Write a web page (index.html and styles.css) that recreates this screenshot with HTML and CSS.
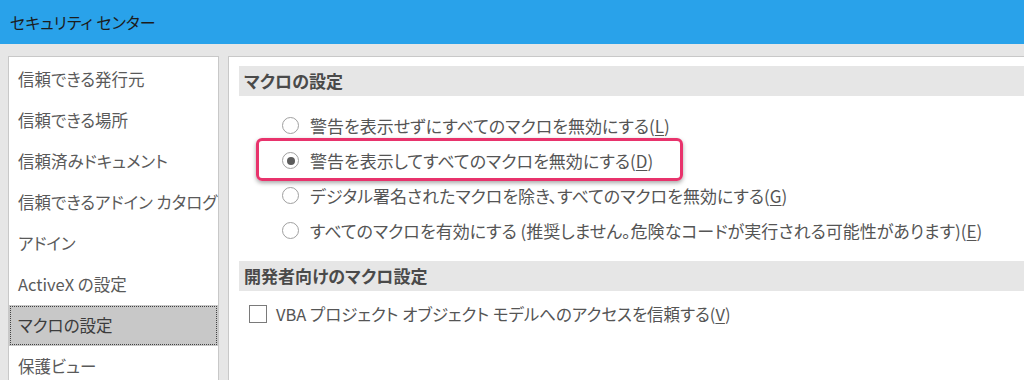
FILE: index.html
```html
<!DOCTYPE html>
<html lang="ja">
<head>
    <meta charset="UTF-8">
    <meta name="viewport" content="width=device-width, initial-scale=1.0">
    <title>セキュリティ センター</title>
    <link rel="stylesheet" href="styles.css">
</head>
<body>
    <div class="titlebar">セキュリティ センター</div>

    <div class="main">
        <div class="sidebar">
            <div class="nav-item">信頼できる発行元</div>
            <div class="nav-item">信頼できる場所</div>
            <div class="nav-item">信頼済みドキュメント</div>
            <div class="nav-item">信頼できるアドイン カタログ</div>
            <div class="nav-item">アドイン</div>
            <div class="nav-item">ActiveX の設定</div>
            <div class="nav-item selected">マクロの設定</div>
            <div class="nav-item">保護ビュー</div>
        </div>

        <div class="content">
            <div class="section-header">マクロの設定</div>
            <div class="option-list">
                <div class="option"><span class="radio"></span>警告を表示せずにすべてのマクロを無効にする(<u>L</u>)</div>
                <div class="option highlighted"><span class="radio checked"></span>警告を表示してすべてのマクロを無効にする(<u>D</u>)</div>
                <div class="option"><span class="radio"></span>デジタル署名されたマクロを除き、すべてのマクロを無効にする(<u>G</u>)</div>
                <div class="option"><span class="radio"></span>すべてのマクロを有効にする (推奨しません。危険なコードが実行される可能性があります)(<u>E</u>)</div>
            </div>

            <div class="section-header">開発者向けのマクロ設定</div>
            <div class="check-row"><span class="checkbox"></span>VBA プロジェクト オブジェクト モデルへのアクセスを信頼する(<u>V</u>)</div>
        </div>
    </div>
</body>
</html>
```

FILE: styles.css
```css
body {
    margin: 0;
    width: 1024px;
    height: 380px;
    overflow: hidden;
    font-family: "Noto Sans CJK JP", "Noto Sans", sans-serif;
    font-feature-settings: "palt"; /* proportional kana, like Meiryo UI */
    background-color: #e6e6e6;
    color: #555;
}

.titlebar {
    height: 44px;
    line-height: 44px;
    padding-left: 10px;
    background-color: #29a2ea;
    color: #1c1c1c;
    font-size: 16px;
}

.main {
    display: flex;
    gap: 9px;
    padding: 12px 0 0 8px;
    height: 336px;
    box-sizing: border-box;
}

.sidebar {
    width: 211px;
    flex-shrink: 0;
    box-sizing: border-box;
    background-color: #fff;
    border: 1px solid #c8c8c8;
    border-bottom: none;
    padding-top: 2px;
}

.nav-item {
    height: 41px;
    line-height: 41px;
    padding-left: 9px;
    font-size: 16.5px;
    color: #5a5a5a;
    white-space: nowrap;
}

.nav-item.selected {
    background-color: #c8c8c8;
    outline: 1px dotted #444;
    outline-offset: -2px;
    color: #3c3c3c;
}

.content {
    flex: 1;
    background-color: #fff;
    border: 1px solid #c8c8c8;
    border-right: none;
    border-bottom: none;
    padding: 9px 0 0 10px;
}

.section-header {
    height: 30px;
    line-height: 30px;
    padding-left: 5px;
    background-color: #e6e6e6;
    font-size: 17px;
    font-weight: bold;
    color: #4a4a4a;
}

.option-list {
    margin: 12px 0 13px;
}

.option {
    display: flex;
    align-items: center;
    height: 35px;
    padding-left: 43px;
    font-size: 17px;
    white-space: nowrap;
}

.option.highlighted {
    position: relative;
}

/* pink annotation frame drawn over the second option */
.option.highlighted::before {
    content: "";
    position: absolute;
    left: 17px;
    top: -5px;
    width: 421px;
    height: 37px;
    border: 3px solid #e8336c;
    border-radius: 6px;
    box-shadow: 0 2px 4px rgba(0, 0, 0, 0.35);
}

.radio {
    width: 15px;
    height: 15px;
    margin-right: 11px;
    border: 1px solid #a0a0a0;
    border-radius: 50%;
    background-color: #fff;
    display: flex;
    align-items: center;
    justify-content: center;
    flex-shrink: 0;
}

.radio.checked::after {
    content: "";
    width: 8px;
    height: 8px;
    border-radius: 50%;
    background-color: #5c5c5c;
}

.check-row {
    display: flex;
    align-items: center;
    height: 35px;
    margin-top: 5px;
    padding-left: 10px;
    font-size: 16.5px;
    white-space: nowrap;
}

.checkbox {
    width: 16px;
    height: 16px;
    margin-right: 9px;
    border: 1px solid #7a7a7a;
    background-color: #fff;
    flex-shrink: 0;
}

u {
    text-decoration-thickness: 1px;
    text-underline-offset: 2px;
}
```
